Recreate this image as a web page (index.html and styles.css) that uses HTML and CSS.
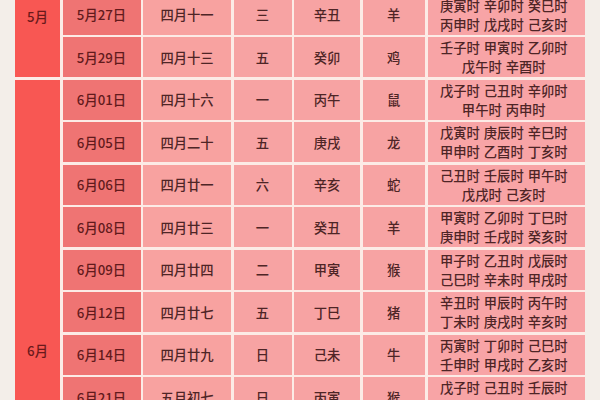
FILE: index.html
```html
<!DOCTYPE html>
<html lang="zh">
<head>
<meta charset="utf-8">
<title>吉日表</title>
<link rel="stylesheet" href="styles.css">
</head>
<body>
<div class="table">
  <div class="month m5">5月</div>
  <div class="month m6">6月</div>

  <div class="cell date">5月27日</div><div class="cell lunar">四月十一</div><div class="cell">三</div><div class="cell">辛丑</div><div class="cell">羊</div>
  <div class="cell hours">庚寅时 辛卯时 癸巳时<br>丙申时 戊戌时 己亥时</div>

  <div class="cell date">5月29日</div><div class="cell lunar">四月十三</div><div class="cell">五</div><div class="cell">癸卯</div><div class="cell">鸡</div>
  <div class="cell hours">壬子时 甲寅时 乙卯时<br>戊午时 辛酉时</div>

  <div class="cell date">6月01日</div><div class="cell lunar">四月十六</div><div class="cell">一</div><div class="cell">丙午</div><div class="cell">鼠</div>
  <div class="cell hours">戊子时 己丑时 辛卯时<br>甲午时 丙申时</div>

  <div class="cell date">6月05日</div><div class="cell lunar">四月二十</div><div class="cell">五</div><div class="cell">庚戌</div><div class="cell">龙</div>
  <div class="cell hours">戊寅时 庚辰时 辛巳时<br>甲申时 乙酉时 丁亥时</div>

  <div class="cell date">6月06日</div><div class="cell lunar">四月廿一</div><div class="cell">六</div><div class="cell">辛亥</div><div class="cell">蛇</div>
  <div class="cell hours">己丑时 壬辰时 甲午时<br>戊戌时 己亥时</div>

  <div class="cell date">6月08日</div><div class="cell lunar">四月廿三</div><div class="cell">一</div><div class="cell">癸丑</div><div class="cell">羊</div>
  <div class="cell hours">甲寅时 乙卯时 丁巳时<br>庚申时 壬戌时 癸亥时</div>

  <div class="cell date">6月09日</div><div class="cell lunar">四月廿四</div><div class="cell">二</div><div class="cell">甲寅</div><div class="cell">猴</div>
  <div class="cell hours">甲子时 乙丑时 戊辰时<br>己巳时 辛未时 甲戌时</div>

  <div class="cell date">6月12日</div><div class="cell lunar">四月廿七</div><div class="cell">五</div><div class="cell">丁巳</div><div class="cell">猪</div>
  <div class="cell hours">辛丑时 甲辰时 丙午时<br>丁未时 庚戌时 辛亥时</div>

  <div class="cell date">6月14日</div><div class="cell lunar">四月廿九</div><div class="cell">日</div><div class="cell">己未</div><div class="cell">牛</div>
  <div class="cell hours">丙寅时 丁卯时 己巳时<br>壬申时 甲戌时 乙亥时</div>

  <div class="cell date">6月21日</div><div class="cell lunar">五月初七</div><div class="cell">日</div><div class="cell">丙寅</div><div class="cell">猴</div>
  <div class="cell hours">戊子时 己丑时 壬辰时<br>&nbsp;</div>
</div>
</body>
</html>
```
FILE: styles.css
```css
html, body {
  margin: 0;
  padding: 0;
}

body {
  background: #f3eee9;
  width: 600px;
  height: 400px;
  overflow: hidden;
  font-family: "Noto Sans CJK SC", "Noto Sans", sans-serif;
  font-size: 13.3px;
  font-weight: 500;
  color: #4e2526;
}

.table {
  margin: -5.5px 15px 0 15px;
  display: grid;
  grid-template-columns: 45px 78px 88px 58px 66px 62.5px 157.5px;
  grid-auto-rows: 40px;
  gap: 2.5px;
  background: #fcebe6;
}

.month {
  grid-column: 1;
  background: #f85753;
  color: #6a1a1b;
  text-align: center;
  line-height: 19px;
}

.m5 {
  grid-row: 1 / span 2;
  padding-top: 12px;
}

.m6 {
  grid-row: 3 / span 8;
  padding-top: 261px;
}

.cell {
  display: flex;
  align-items: center;
  justify-content: center;
  text-align: center;
  background: #f7a3a3;
  line-height: 19px;
}

.date {
  background: #ef7473;
  color: #621a1c;
}

.lunar {
  background: #f8a2a0;
}

.hours {
  background: #f8a4a6;
  padding-right: 5px;
  white-space: nowrap;
  word-spacing: 1px;
}
```
